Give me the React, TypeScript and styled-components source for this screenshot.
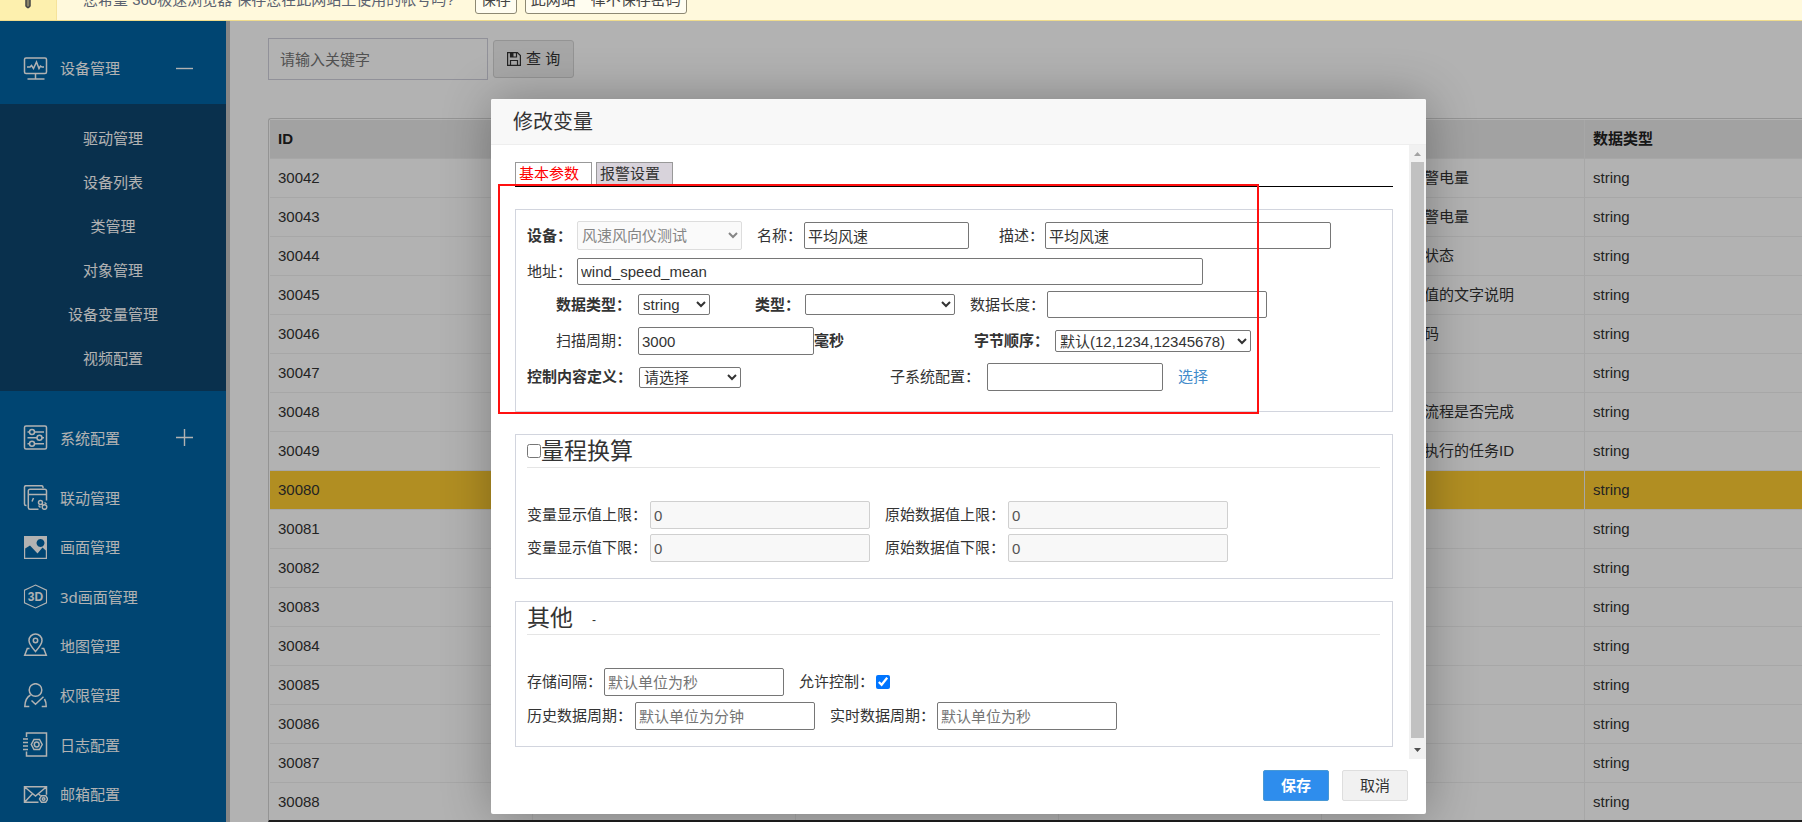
import React from 'react';
import styled, { createGlobalStyle, css } from 'styled-components';

const GlobalStyle = createGlobalStyle`
  *, *::before, *::after { box-sizing: border-box; }
  body {
    margin: 0;
    overflow: hidden;
    background: #fff;
    color: #333;
    font-family: "Liberation Sans", "Noto Sans CJK SC", sans-serif;
    font-size: 15px;
    line-height: 20px;
  }
  input, select, button { font: inherit; }
`;

const Page = styled.div`
  display: flex;
  flex-direction: column;
  height: 100vh;
  overflow: hidden;
`;

/* ---------- password prompt ---------- */

const PromptBar = styled.div`
  flex: none;
  display: flex;
  align-items: center;
  height: 42px;
  margin-top: -21px;
  background: #fff9dc;
  border-bottom: 1px solid #f0dc8c;
  color: #5b6270;
`;

const PromptIcon = styled.div`
  display: flex;
  align-items: center;
  justify-content: center;
  align-self: stretch;
  width: 57px;
  margin-right: 26px;
  background: #fdf0ae;
  border-right: 1px solid #f6e39a;
`;

const PromptText = styled.span`
  margin-right: 20px;
`;

const PromptButton = styled.button`
  height: 28px;
  margin-right: 8px;
  padding: 0 5px;
  border: 1px solid #8d8973;
  border-radius: 3px;
  background: #fffdf0;
  color: #444;
`;

/* ---------- shell ---------- */

const Shell = styled.div`
  position: relative;
  flex: 1;
  display: flex;
  min-height: 0;
`;

const Sidebar = styled.nav`
  flex: none;
  width: 230px;
  border-right: 4px solid #c0c0c0;
  background: #0064a4;
  color: #fff;
  font-family: "Noto Sans", "Noto Sans CJK SC", sans-serif;
`;

const GroupHeader = styled.button<{ $h: number }>`
  display: flex;
  align-items: center;
  width: 100%;
  height: ${(p) => p.$h}px;
  padding: 11px 33px 0 23px;
  border: 0;
  background: none;
  color: inherit;
  text-align: left;
  span { flex: 1; margin-left: 12px; }
`;

const SubMenu = styled.ul`
  margin: 0;
  padding: 12px 0 11px;
  list-style: none;
  background: #0d456f;
`;

const SubItem = styled.li`
  height: 44px;
  text-align: center;
  line-height: 44px;
`;

const MenuLink = styled.a`
  color: inherit;
  text-decoration: none;
`;

const MainMenu = styled.ul`
  display: grid;
  grid-auto-rows: 1fr;
  height: 346px;
  margin: 0;
  padding: 0;
  list-style: none;
`;

const MainItem = styled.li`
  display: flex;
  align-items: center;
  gap: 12px;
  padding-left: 23px;
`;

const Content = styled.main`
  flex: 1;
  display: flex;
  flex-direction: column;
  min-width: 0;
  padding: 17px 0 0 38px;
`;

const SearchBar = styled.form`
  display: flex;
  align-items: center;
  gap: 5px;
  margin-bottom: 38px;
`;

const SearchInput = styled.input`
  width: 220px;
  height: 42px;
  padding: 0 11px;
  border: 1px solid #d0d0dc;
  background: #fff;
  &::placeholder { color: #757575; }
`;

const SearchButton = styled.button`
  display: flex;
  align-items: center;
  gap: 5px;
  height: 38px;
  padding: 0 13px;
  border: 1px solid #d5d5d5;
  border-radius: 3px;
  background: #efefef;
  color: #333;
`;

const TableFrame = styled.div`
  flex: 1;
  min-height: 0;
  overflow: hidden;
  padding: 1px 0 0 1px;
  border: 1px solid #d4d4d4;
  border-width: 1px 0 2px 1px;
  border-bottom-color: #2c2c2c;
  border-top-left-radius: 3px;
`;

const Table = styled.table`
  width: 100%;
  table-layout: fixed;
  border-collapse: separate;
  border-spacing: 0;
  th, td {
    height: 39px;
    padding: 0 8px;
    border-right: 1px solid #f0f0f0;
    border-bottom: 1px solid #f0f0f0;
    text-align: left;
    white-space: nowrap;
  }
  th:last-child, td:last-child { border-right: 0; }
  th { background: #e9e9e9; color: #222; }
`;

const Col = styled.col`
  width: 263px;
`;

const DataRow = styled.tr<{ $active?: boolean }>`
  background: ${(p) => (p.$active ? '#fecc32' : 'transparent')};
  td:nth-child(5) { padding-left: 102px; }
`;

/* ---------- dialog ---------- */

const Overlay = styled.div`
  position: absolute;
  inset: 0;
  background: rgba(0, 0, 0, 0.3);
`;

const Dialog = styled.section`
  position: absolute;
  top: 78px;
  left: 491px;
  right: 376px;
  border-radius: 2px;
  background: #fff;
  box-shadow: 1px 1px 50px rgba(0, 0, 0, 0.3);
`;

const DialogTitle = styled.h2`
  margin: 0;
  height: 46px;
  padding: 0 22px;
  border-bottom: 1px solid #eee;
  border-radius: 2px 2px 0 0;
  background: #f8f8f8;
  font-size: 20px;
  font-weight: 400;
  line-height: 46px;
`;

const DialogBody = styled.div`
  display: flex;
  height: 614px;
`;

const Form = styled.form`
  flex: 1;
  min-width: 0;
  padding: 17px 16px 0 24px;
`;

const Scrollbar = styled.div`
  display: flex;
  flex-direction: column;
  align-items: center;
  width: 17px;
  background: #f1f1f1;
`;

const ScrollThumb = styled.div`
  flex: 1;
  width: 13px;
  background: #c1c1c1;
`;

const ScrollArrow = styled.svg<{ $h: number }>`
  flex: none;
  width: 17px;
  height: ${(p) => p.$h}px;
`;

const Tabs = styled.div`
  display: flex;
  gap: 4px;
  margin-bottom: 22px;
  border-bottom: 1px solid #000;
`;

const Tab = styled.button<{ $active?: boolean }>`
  width: 77px;
  height: 24px;
  padding: 0 3px 2px;
  border: 1px solid #999;
  border-bottom: 0;
  background: ${(p) => (p.$active ? '#fff' : '#d8d3db')};
  color: ${(p) => (p.$active ? '#f00' : '#333')};
  text-align: left;
`;

const Panel = styled.fieldset<{ $bottom: number }>`
  min-width: 0;
  margin: 0 0 22px;
  padding: 0 12px ${(p) => p.$bottom}px 11px;
  border: 1px solid #d2d5de;
`;

const PanelTitle = styled.h3`
  display: flex;
  align-items: center;
  height: 33px;
  margin: 0 0 33px;
  border-bottom: 1px solid #e5e5e5;
  font-size: 23px;
  font-weight: 400;
  line-height: 32px;
`;

const Dash = styled.small`
  margin: 4px 0 0 19px;
  font-size: 12px;
`;

const Row = styled.div<{ $top?: number; $indent?: boolean }>`
  display: flex;
  align-items: center;
  margin-top: ${(p) => p.$top ?? 0}px;
  padding-left: ${(p) => (p.$indent ? 29 : 0)}px;
  white-space: nowrap;
`;

const Label = styled.label<{ $w: number; $gap?: number; $bold?: boolean }>`
  flex: none;
  width: ${(p) => p.$w}px;
  margin-left: ${(p) => p.$gap ?? 0}px;
  font-weight: ${(p) => (p.$bold ? 700 : 400)};
`;

const control = css<{ $w: number; $h?: number }>`
  flex: none;
  width: ${(p) => p.$w}px;
  border: 1px solid #767676;
  border-radius: 2px;
  background: #fff;
  color: #333;
`;

const TextInput = styled.input<{ $w: number; $h?: number }>`
  ${control}
  height: ${(p) => p.$h ?? 28}px;
  padding: 0 3px;
  &::placeholder { color: #757575; }
  &:disabled { border-color: #d0d0d0; background: #f8f8f8; color: #545454; }
`;

const Select = styled.select<{ $w: number; $h?: number }>`
  ${control}
  height: ${(p) => p.$h ?? 21}px;
  &:disabled { border-color: #ddd; background: #fafafa; color: #858585; opacity: 1; }
`;

const Unit = styled.b`
  flex: none;
  width: 160px;
`;

const Check = styled.input`
  flex: none;
  width: 14px;
  height: 14px;
  margin: 0;
`;

const PickLink = styled.a`
  margin-left: 15px;
  color: #428bca;
  text-decoration: none;
`;

const DialogFooter = styled.div`
  display: flex;
  justify-content: flex-end;
  gap: 13px;
  height: 55px;
  padding: 11px 18px 0 0;
`;

const ActionButton = styled.button<{ $primary?: boolean }>`
  width: 66px;
  height: 31px;
  padding: 0;
  border: 1px solid ${(p) => (p.$primary ? '#4898d5' : '#dedede')};
  border-radius: 2px;
  background: ${(p) => (p.$primary ? '#2e8ded' : '#f1f1f1')};
  color: ${(p) => (p.$primary ? '#fff' : '#333')};
  font-weight: ${(p) => (p.$primary ? 700 : 400)};
`;

/* red frame that marks the edited group of fields */
const Highlight = styled.div`
  position: absolute;
  top: 85px;
  left: 7px;
  width: 761px;
  height: 230px;
  border: 2px solid #ff1010;
  pointer-events: none;
`;

/* ---------- icons ---------- */

const Glyph = styled.svg`
  flex: none;
  width: 25px;
  height: 25px;
  fill: none;
  stroke: currentColor;
  stroke-width: 1.5;
`;

const Sign = styled.svg`
  width: 17px;
  height: 17px;
  stroke: currentColor;
  stroke-width: 1.4;
`;

const icons: Record<string, React.ReactNode> = {
  monitor: (
    <>
      <rect x="1.5" y="2" width="22" height="15.5" rx="1.5" />
      <path d="M4 11h3l1.500-1.500 2 3 3-6.500 2.500 6.500 1.500-2.500 1.500 1H21M12.500 17.500v5M4.500 23h17" />
    </>
  ),
  sliders: (
    <>
      <rect x="1.5" y="1" width="22" height="23" rx="1.500" />
      <circle cx="9" cy="7" r="2.500" />
      <circle cx="16.500" cy="12.800" r="2.500" />
      <circle cx="9" cy="18.800" r="2.500" />
      <path d="M4.500 7h2M11.500 7H21M4.500 12.800H14M19 12.800h2M4.500 18.800h2M11.500 18.800H21" />
    </>
  ),
  linkage: (
    <>
      <path d="M3.500 20.500H3a1.500 1.500 0 0 1-1.500-1.500V2A1.500 1.500 0 0 1 3 .7h15.500A1.500 1.500 0 0 1 20 2.200v1" />
      <path d="M15.500 24.200H7A1.700 1.700 0 0 1 5.300 22.500V6A1.700 1.700 0 0 1 7 4.200h14.800A1.700 1.700 0 0 1 23.500 6v9.500M5.300 9.500h18.200M10.500 13l-1.500 3.500" />
      <circle cx="17.500" cy="17.500" r="2" />
      <circle cx="21.500" cy="22" r="2.300" />
      <path d="M18.800 19l1.500 1.500M21.500 17.500l2 1.500M15.500 20.500l2 2" />
    </>
  ),
  picture: (
    <path
      fill="currentColor"
      stroke="none"
      fillRule="evenodd"
      d="M1 1h23v23H1zM2.200 13.500v9.300h20.600v-7.300l-3.300-3-5 6-7.500-8zM17.500 4a4 4 0 1 0 .01 0z"
    />
  ),
  map: (
    <>
      <path d="M12.500 18.500C8.500 14 6 11 6 7.500a6.500 6.500 0 0 1 13 0c0 3.500-2.500 6.500-6.500 11z" />
      <circle cx="12.500" cy="7.500" r="2.200" />
      <path d="M6.500 15.500H4.300L1.700 22.200h21.600l-2.600-6.700h-2.200" />
    </>
  ),
  user: (
    <>
      <circle cx="12.500" cy="7" r="6.300" />
      <path d="M7.500 12C4 14 2 17.500 1.800 23.500h4.500M8.500 17.500l4 3.800 8-7.500M21.500 16c1.200 2 1.700 4.500 1.700 7.500h-4.500" />
    </>
  ),
  log: (
    <>
      <path d="M3.500 5V1h20v23h-20v-4.500M0 7h5M0 10.500h5M0 14h5M0 17.500h5" />
      <path d="M11 7.500h5.500l2.700 5-2.700 5H11l-2.700-5z" />
      <circle cx="13.700" cy="12.500" r="2.400" />
    </>
  ),
  mail: (
    <>
      <path d="M15.500 20.200H1.500V4.800h22v8M1.700 5l10.800 9L23.300 5M2 19.700l7.500-8M15.500 11.700l2 2" />
      <path d="M18.500 13.700h4.200l2 3.300-2 3.300h-4.200l-2-3.300z" />
      <circle cx="20.600" cy="17" r="1.300" />
    </>
  ),
};

const Icon = ({ name }: { name: string }) => (
  <Glyph viewBox="0 0 25 25" aria-hidden="true">
    {name === '3d' ? (
      <>
        <path d="M12.500 1l11 5.200v12.600l-11 5.200-11-5.200V6.200z" strokeWidth="1.100" />
        <text
          x="12.500"
          y="16.500"
          textAnchor="middle"
          fontFamily="Liberation Sans, sans-serif"
          fontSize="12"
          fontWeight="700"
          fill="currentColor"
          stroke="none"
        >
          3D
        </text>
      </>
    ) : (
      icons[name]
    )}
  </Glyph>
);

const FloppyIcon = () => (
  <svg width="14" height="14" viewBox="0 0 14 14" fill="none" stroke="currentColor" aria-hidden="true">
    <path d="M.6.6h9.800l3 3v9.800H.6zM3.500 13V8.500h7V13" strokeWidth="1.200" />
    <path d="M3.500 1v4h6V1" strokeWidth="1.200" />
    <path d="M4 1h2.500v4H4z" fill="currentColor" stroke="none" />
  </svg>
);

/* ---------- data ---------- */

const subMenu = ['驱动管理', '设备列表', '类管理', '对象管理', '设备变量管理', '视频配置'];

const mainMenu = [
  { icon: 'linkage', text: '联动管理' },
  { icon: 'picture', text: '画面管理' },
  { icon: '3d', text: '3d画面管理' },
  { icon: 'map', text: '地图管理' },
  { icon: 'user', text: '权限管理' },
  { icon: 'log', text: '日志配置' },
  { icon: 'mail', text: '邮箱配置' },
];

const rows: [number, string][] = [
  [30042, '警电量'],
  [30043, '警电量'],
  [30044, '状态'],
  [30045, '值的文字说明'],
  [30046, '码'],
  [30047, ''],
  [30048, '流程是否完成'],
  [30049, '执行的任务ID'],
  [30080, ''],
  [30081, ''],
  [30082, ''],
  [30083, ''],
  [30084, ''],
  [30085, ''],
  [30086, ''],
  [30087, ''],
  [30088, ''],
];

const Navigation = () => (
  <Sidebar>
    <GroupHeader type="button" $h={83}>
      <Icon name="monitor" />
      <span>设备管理</span>
      <Sign viewBox="0 0 17 17"><path d="M0 8.500h17" /></Sign>
    </GroupHeader>
    <SubMenu>
      {subMenu.map((t) => (
        <SubItem key={t}><MenuLink href="#">{t}</MenuLink></SubItem>
      ))}
    </SubMenu>
    <GroupHeader type="button" $h={82}>
      <Icon name="sliders" />
      <span>系统配置</span>
      <Sign viewBox="0 0 17 17"><path d="M0 8.500h17M8.500 0v17" /></Sign>
    </GroupHeader>
    <MainMenu>
      {mainMenu.map((m) => (
        <MainItem key={m.text}>
          <Icon name={m.icon} />
          <MenuLink href="#">{m.text}</MenuLink>
        </MainItem>
      ))}
    </MainMenu>
  </Sidebar>
);

const VariableTable = () => (
  <TableFrame>
    <Table>
      <colgroup>
        <Col /><Col /><Col /><Col /><Col /><col />
      </colgroup>
      <thead>
        <tr>
          <th>ID</th><th /><th /><th /><th /><th>数据类型</th>
        </tr>
      </thead>
      <tbody>
        {rows.map(([id, desc]) => (
          <DataRow key={id} $active={id === 30080}>
            <td>{id}</td><td /><td /><td /><td>{desc}</td><td>string</td>
          </DataRow>
        ))}
      </tbody>
    </Table>
  </TableFrame>
);

const BasicPanel = () => (
  <Panel $bottom={20}>
    <Row $top={11}>
      <Label htmlFor="device" $w={50} $bold>设备：</Label>
      <Select id="device" $w={165} $h={29} disabled><option>风速风向仪测试</option></Select>
      <Label htmlFor="name" $w={47} $gap={15}>名称：</Label>
      <TextInput id="name" $w={165} $h={27} defaultValue="平均风速" />
      <Label htmlFor="desc" $w={46} $gap={30}>描述：</Label>
      <TextInput id="desc" $w={286} $h={27} defaultValue="平均风速" />
    </Row>
    <Row $top={8}>
      <Label htmlFor="address" $w={50}>地址：</Label>
      <TextInput id="address" $w={626} $h={27} defaultValue="wind_speed_mean" />
    </Row>
    <Row $top={6} $indent>
      <Label htmlFor="dataType" $w={82} $bold>数据类型：</Label>
      <Select id="dataType" $w={72}><option>string</option></Select>
      <Label htmlFor="kind" $w={50} $gap={45} $bold>类型：</Label>
      <Select id="kind" $w={150}><option /></Select>
      <Label htmlFor="length" $w={77} $gap={15}>数据长度：</Label>
      <TextInput id="length" $w={220} $h={27} />
    </Row>
    <Row $top={9} $indent>
      <Label htmlFor="scan" $w={82}>扫描周期：</Label>
      <TextInput id="scan" $w={176} defaultValue="3000" />
      <Unit>毫秒</Unit>
      <Label htmlFor="order" $w={81} $bold>字节顺序：</Label>
      <Select id="order" $w={196} $h={22}><option>默认(12,1234,12345678)</option></Select>
    </Row>
    <Row $top={8}>
      <Label htmlFor="control" $w={112} $bold>控制内容定义：</Label>
      <Select id="control" $w={102}><option>请选择</option></Select>
      <Label htmlFor="subsystem" $w={97} $gap={149}>子系统配置：</Label>
      <TextInput id="subsystem" $w={176} />
      <PickLink href="#">选择</PickLink>
    </Row>
  </Panel>
);

const RangePanel = () => (
  <Panel $bottom={16}>
    <PanelTitle>
      <Check type="checkbox" id="range" />
      <label htmlFor="range">量程换算</label>
    </PanelTitle>
    <Row>
      <Label htmlFor="showMax" $w={123}>变量显示值上限：</Label>
      <TextInput id="showMax" $w={220} disabled defaultValue="0" />
      <Label htmlFor="rawMax" $w={123} $gap={15}>原始数据值上限：</Label>
      <TextInput id="rawMax" $w={220} disabled defaultValue="0" />
    </Row>
    <Row $top={5}>
      <Label htmlFor="showMin" $w={123}>变量显示值下限：</Label>
      <TextInput id="showMin" $w={220} disabled defaultValue="0" />
      <Label htmlFor="rawMin" $w={123} $gap={15}>原始数据值下限：</Label>
      <TextInput id="rawMin" $w={220} disabled defaultValue="0" />
    </Row>
  </Panel>
);

const OtherPanel = () => (
  <Panel $bottom={16}>
    <PanelTitle>其他<Dash>-</Dash></PanelTitle>
    <Row>
      <Label htmlFor="interval" $w={77}>存储间隔：</Label>
      <TextInput id="interval" $w={180} placeholder="默认单位为秒" />
      <Label htmlFor="allow" $w={77} $gap={15}>允许控制：</Label>
      <Check type="checkbox" id="allow" defaultChecked />
    </Row>
    <Row $top={6}>
      <Label htmlFor="history" $w={108}>历史数据周期：</Label>
      <TextInput id="history" $w={180} placeholder="默认单位为分钟" />
      <Label htmlFor="realtime" $w={107} $gap={15}>实时数据周期：</Label>
      <TextInput id="realtime" $w={180} placeholder="默认单位为秒" />
    </Row>
  </Panel>
);

const EditDialog = () => (
  <Dialog role="dialog" aria-labelledby="dialog-title">
    <DialogTitle id="dialog-title">修改变量</DialogTitle>
    <DialogBody>
      <Form>
        <Tabs>
          <Tab type="button" $active>基本参数</Tab>
          <Tab type="button">报警设置</Tab>
        </Tabs>
        <BasicPanel />
        <RangePanel />
        <OtherPanel />
      </Form>
      <Scrollbar>
        <ScrollArrow $h={17} viewBox="0 0 17 17"><path d="M5 11h7L8.500 7z" fill="#a3a3a3" /></ScrollArrow>
        <ScrollThumb />
        <ScrollArrow $h={21} viewBox="0 0 17 21"><path d="M5 10h7l-3.500 4z" fill="#505050" /></ScrollArrow>
      </Scrollbar>
    </DialogBody>
    <DialogFooter>
      <ActionButton type="button" $primary>保存</ActionButton>
      <ActionButton type="button">取消</ActionButton>
    </DialogFooter>
    <Highlight />
  </Dialog>
);

export default function App() {
  return (
    <>
      <GlobalStyle />
      <Page>
        <PromptBar>
          <PromptIcon>
            <svg width="8" height="18" viewBox="0 0 8 18">
              <path d="M2 0v15l1.500 1.500h1L6 15V0" fill="#8a8468" stroke="#444" strokeWidth="1.500" />
            </svg>
          </PromptIcon>
          <PromptText>您希望 360极速浏览器 保存您在此网站上使用的帐号吗?</PromptText>
          <PromptButton type="button">保存</PromptButton>
          <PromptButton type="button">此网站一律不保存密码</PromptButton>
        </PromptBar>
        <Shell>
          <Navigation />
          <Content>
            <SearchBar>
              <SearchInput type="text" aria-label="关键字" placeholder="请输入关键字" />
              <SearchButton type="button"><FloppyIcon />查 询</SearchButton>
            </SearchBar>
            <VariableTable />
          </Content>
          <Overlay />
          <EditDialog />
        </Shell>
      </Page>
    </>
  );
}
